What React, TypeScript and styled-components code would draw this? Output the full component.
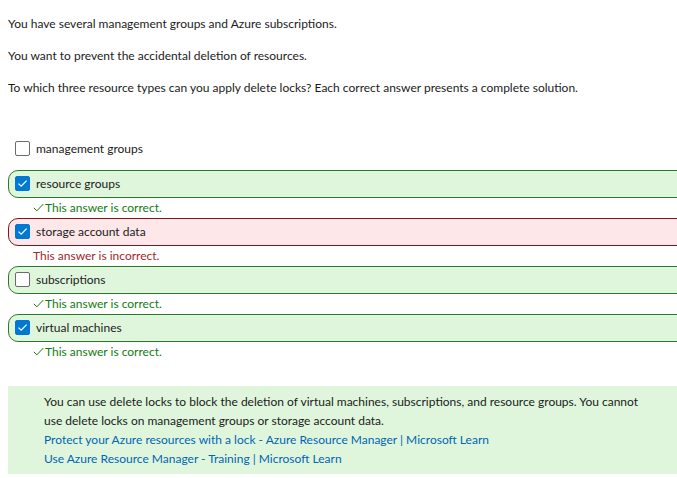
import React from "react";
import styled, { createGlobalStyle, css } from "styled-components";

const Global = createGlobalStyle`
  html, body { margin: 0; padding: 0; background: #fff; overflow: hidden; }
  body { font-family: "Lato", "Segoe UI", sans-serif; font-size: 12px; color: #1b1b1b; }
`;

const Page = styled.div`
  width: 700px;
  padding: 15px 0 0 8px;
  box-sizing: border-box;
`;

const Para = styled.p`
  margin: 0 0 14px;
  line-height: 18px;
`;

const OptionList = styled.div`
  margin-top: 38px;
  display: flex;
  flex-direction: column;
`;

type State = "none" | "correct" | "incorrect";

const OptionRow = styled.div<{ $state: State }>`
  height: 28px;
  box-sizing: border-box;
  display: flex;
  align-items: center;
  gap: 6px;
  padding: 0 0 1px 6px;
  border: 1px solid transparent;
  border-radius: 10px;
  ${(p) =>
    p.$state === "correct" &&
    css`
      background: #dff6dd;
      border-color: #2b7a2b;
    `}
  ${(p) =>
    p.$state === "incorrect" &&
    css`
      background: #fde7e9;
      border-color: #7a1a1f;
    `}
`;

const Box = styled.span<{ $checked: boolean }>`
  width: 15px;
  height: 15px;
  box-sizing: border-box;
  border-radius: 2px;
  display: inline-flex;
  align-items: center;
  justify-content: center;
  ${(p) =>
    p.$checked
      ? css`
          background: #0078d4;
          border: 1px solid #0078d4;
        `
      : css`
          background: #fff;
          border: 1px solid #6b6b6b;
        `}
`;

const Label = styled.span`
  color: #1b1b1b;
`;

const Feedback = styled.div<{ $ok: boolean }>`
  height: 20px;
  line-height: 19px;
  padding-left: 25px;
  color: ${(p) => (p.$ok ? "#107c10" : "#a4262c")};
`;

const Spacer = styled.div`
  height: 7px;
`;

const Explain = styled.div`
  margin-top: 24px;
  background: #dff6dd;
  padding: 6px 30px 6px 36px;
  line-height: 19px;
`;

const Link = styled.a`
  display: block;
  color: #0065b3;
  text-decoration: none;
`;

const Check = () => (
  <svg width="11" height="9" viewBox="0 0 11 9">
    <path d="M1.5 4.6 L4.2 7.2 L9.6 1.6" fill="none" stroke="#fff" strokeWidth="1.3" />
  </svg>
);

const Tick = styled.svg`
  margin-right: 1px;
`;

type Opt = { label: string; checked: boolean; state: State };
const options: Opt[] = [
  { label: "management groups", checked: false, state: "none" },
  { label: "resource groups", checked: true, state: "correct" },
  { label: "storage account data", checked: true, state: "incorrect" },
  { label: "subscriptions", checked: false, state: "correct" },
  { label: "virtual machines", checked: true, state: "correct" },
];

export default function App() {
  return (
    <>
      <Global />
      <Page>
        <Para>You have several management groups and Azure subscriptions.</Para>
        <Para>You want to prevent the accidental deletion of resources.</Para>
        <Para>To which three resource types can you apply delete locks? Each correct answer presents a complete solution.</Para>
        <OptionList>
          {options.map((o) => (
            <React.Fragment key={o.label}>
              <OptionRow $state={o.state}>
                <Box $checked={o.checked}>{o.checked && <Check />}</Box>
                <Label>{o.label}</Label>
              </OptionRow>
              {o.state === "none" ? (
                <Spacer />
              ) : o.state === "correct" ? (
                <Feedback $ok>
                  <Tick width="11" height="9" viewBox="0 0 11 9">
                    <path d="M0.8 4.8 L3.8 7.8 L10.4 1" fill="none" stroke="#107c10" strokeWidth="1" />
                  </Tick>
                  This answer is correct.
                </Feedback>
              ) : (
                <Feedback $ok={false}>This answer is incorrect.</Feedback>
              )}
            </React.Fragment>
          ))}
        </OptionList>
        <Explain>
          You can use delete locks to block the deletion of virtual machines, subscriptions, and resource groups. You cannot
          <br />
          use delete locks on management groups or storage account data.
          <Link href="#">Protect your Azure resources with a lock - Azure Resource Manager | Microsoft Learn</Link>
          <Link href="#">Use Azure Resource Manager - Training | Microsoft Learn</Link>
        </Explain>
      </Page>
    </>
  );
}
